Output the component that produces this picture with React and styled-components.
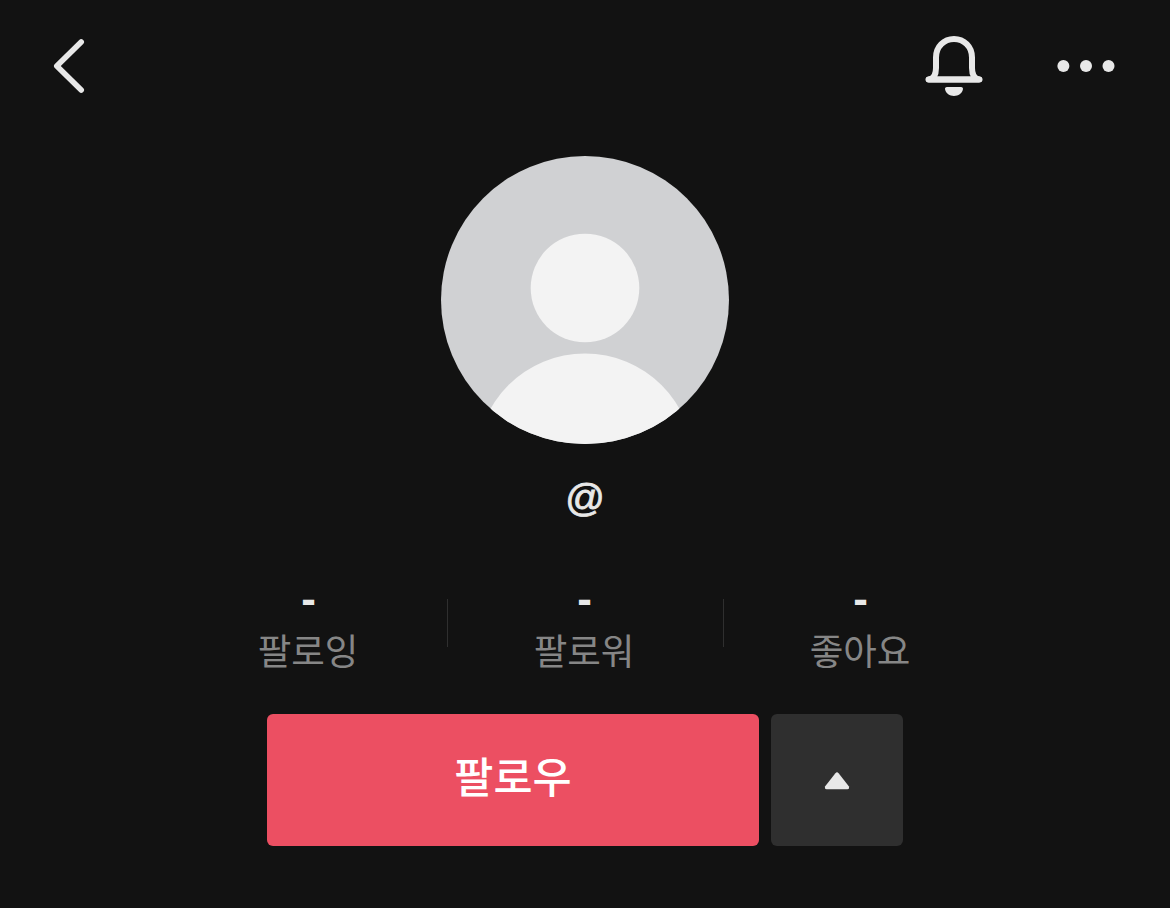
import React from 'react';
import styled, { createGlobalStyle } from 'styled-components';

const GlobalStyle = createGlobalStyle`
  body {
    margin: 0;
    background-color: #121212;
  }

  button {
    padding: 0;
    border: none;
    background: none;
    cursor: pointer;
    font-family: inherit;
  }

  svg {
    display: block;
  }
`;

const ProfilePage = styled.div`
  box-sizing: border-box;
  height: 908px;
  display: flex;
  flex-direction: column;
  align-items: center;
  background-color: #121212;
  color: #e8e8e8;
  font-family: 'Noto Sans CJK KR', sans-serif;
  overflow: hidden;
`;

const Header = styled.header`
  box-sizing: border-box;
  width: 100%;
  height: 132px;
  padding: 0 48px;
  display: flex;
  align-items: center;
  justify-content: space-between;
`;

const HeaderActions = styled.div`
  display: flex;
  gap: 60px;
`;

const IconButton = styled.button`
  width: 72px;
  height: 72px;
  color: #e8e8e8;
`;

const Avatar = styled.div`
  width: 288px;
  height: 288px;
  margin-top: 24px;
  border-radius: 50%;
  background-color: #d0d1d3;
  overflow: hidden;
`;

const Handle = styled.div`
  height: 60px;
  margin-top: 24px;
  font-family: 'Liberation Sans', sans-serif;
  font-size: 39px;
  line-height: 60px;
  -webkit-text-stroke: 0.8px #e8e8e8;
`;

const Stats = styled.div`
  width: 828px;
  height: 84px;
  margin: 65px 0 0 2px;
  display: grid;
  grid-template-columns: repeat(3, 1fr);
`;

const Stat = styled.div`
  padding-right: 4px;
  display: flex;
  flex-direction: column;
  align-items: center;
  background: ${props => props.$divided
    ? 'linear-gradient(#2f2f2f, #2f2f2f) right 6px / 1px 48px no-repeat'
    : 'none'};
`;

const StatValue = styled.div`
  height: 30px;
  padding-left: 1px;
  font-family: 'Liberation Sans', sans-serif;
  font-size: 44px;
  font-weight: bold;
  line-height: 11px;
`;

const StatLabel = styled.div`
  color: #868686;
  font-size: 36.5px;
  line-height: 54px;
`;

const Actions = styled.div`
  margin-top: 37px;
  display: flex;
  gap: 12px;
`;

const FollowButton = styled.button`
  width: 492px;
  height: 132px;
  border-radius: 6px;
  && {
    padding-bottom: 12px;
    background-color: #ec4f62;
  }
  color: #fff;
  font-size: 42.5px;
  font-weight: 500;
`;

const MoreButton = styled.button`
  width: 132px;
  height: 132px;
  border-radius: 6px;
  && {
    background-color: #2f2f2f;
  }
  color: #e8e8e8;
`;

const stats = [
  { label: '팔로잉', value: '-' },
  { label: '팔로워', value: '-' },
  { label: '좋아요', value: '-' },
];

const BackIcon = () => (
  <svg width="72" height="72" viewBox="0 0 72 72" fill="none" stroke="currentColor">
    <path d="M33.2 12L8.8 36L33.2 60" strokeWidth="5.6" strokeLinecap="round" strokeLinejoin="round" />
  </svg>
);

const BellIcon = () => (
  <svg width="72" height="72" viewBox="0 0 72 72" fill="none">
    <path
      d="M11 49.5C16 48.5 18 44 18 38V27.5C18 16.5 26 9 36 9S54 16.5 54 27.5V38C54 44 56 48.5 61 49.5Z"
      stroke="currentColor"
      strokeWidth="6"
      strokeLinejoin="round"
    />
    <path d="M10.5 49.4H61.5" stroke="currentColor" strokeWidth="6" strokeLinecap="round" />
    <path d="M29 57H43C44.5 57 45.3 58.1 44.9 59.6C44 63.7 40.4 66 36 66S28 63.7 27.1 59.6C26.7 58.1 27.5 57 29 57Z" fill="currentColor" />
  </svg>
);

const DotsIcon = () => (
  <svg width="72" height="72" viewBox="0 0 72 72" fill="currentColor">
    <circle cx="13.4" cy="36" r="6" />
    <circle cx="36" cy="36" r="6" />
    <circle cx="58.5" cy="36" r="6" />
  </svg>
);

const PersonIcon = () => (
  <svg width="288" height="288" viewBox="0 0 288 288" fill="#f3f3f3">
    <circle cx="144" cy="132" r="54.3" />
    <circle cx="144" cy="306" r="108.5" />
  </svg>
);

const TriangleIcon = () => (
  <svg width="132" height="132" viewBox="0 0 132 132" fill="currentColor">
    <path d="M64.4 59.3Q66 57.4 67.6 59.3L77.8 72.3Q78.8 75.2 76.4 75.2H55.6Q53.2 75.2 54.2 72.3Z" />
  </svg>
);

const App = () => {
  return (
    <>
      <GlobalStyle />
      <ProfilePage>
        <Header>
          <IconButton aria-label="뒤로">
            <BackIcon />
          </IconButton>
          <HeaderActions>
            <IconButton aria-label="알림">
              <BellIcon />
            </IconButton>
            <IconButton aria-label="더 보기">
              <DotsIcon />
            </IconButton>
          </HeaderActions>
        </Header>

        <Avatar>
          <PersonIcon />
        </Avatar>
        <Handle>@</Handle>

        <Stats>
          {stats.map((stat, index) => (
            <Stat key={stat.label} $divided={index < stats.length - 1}>
              <StatValue>{stat.value}</StatValue>
              <StatLabel>{stat.label}</StatLabel>
            </Stat>
          ))}
        </Stats>

        <Actions>
          <FollowButton>팔로우</FollowButton>
          <MoreButton aria-label="추천 계정">
            <TriangleIcon />
          </MoreButton>
        </Actions>
      </ProfilePage>
    </>
  );
};

export default App;
